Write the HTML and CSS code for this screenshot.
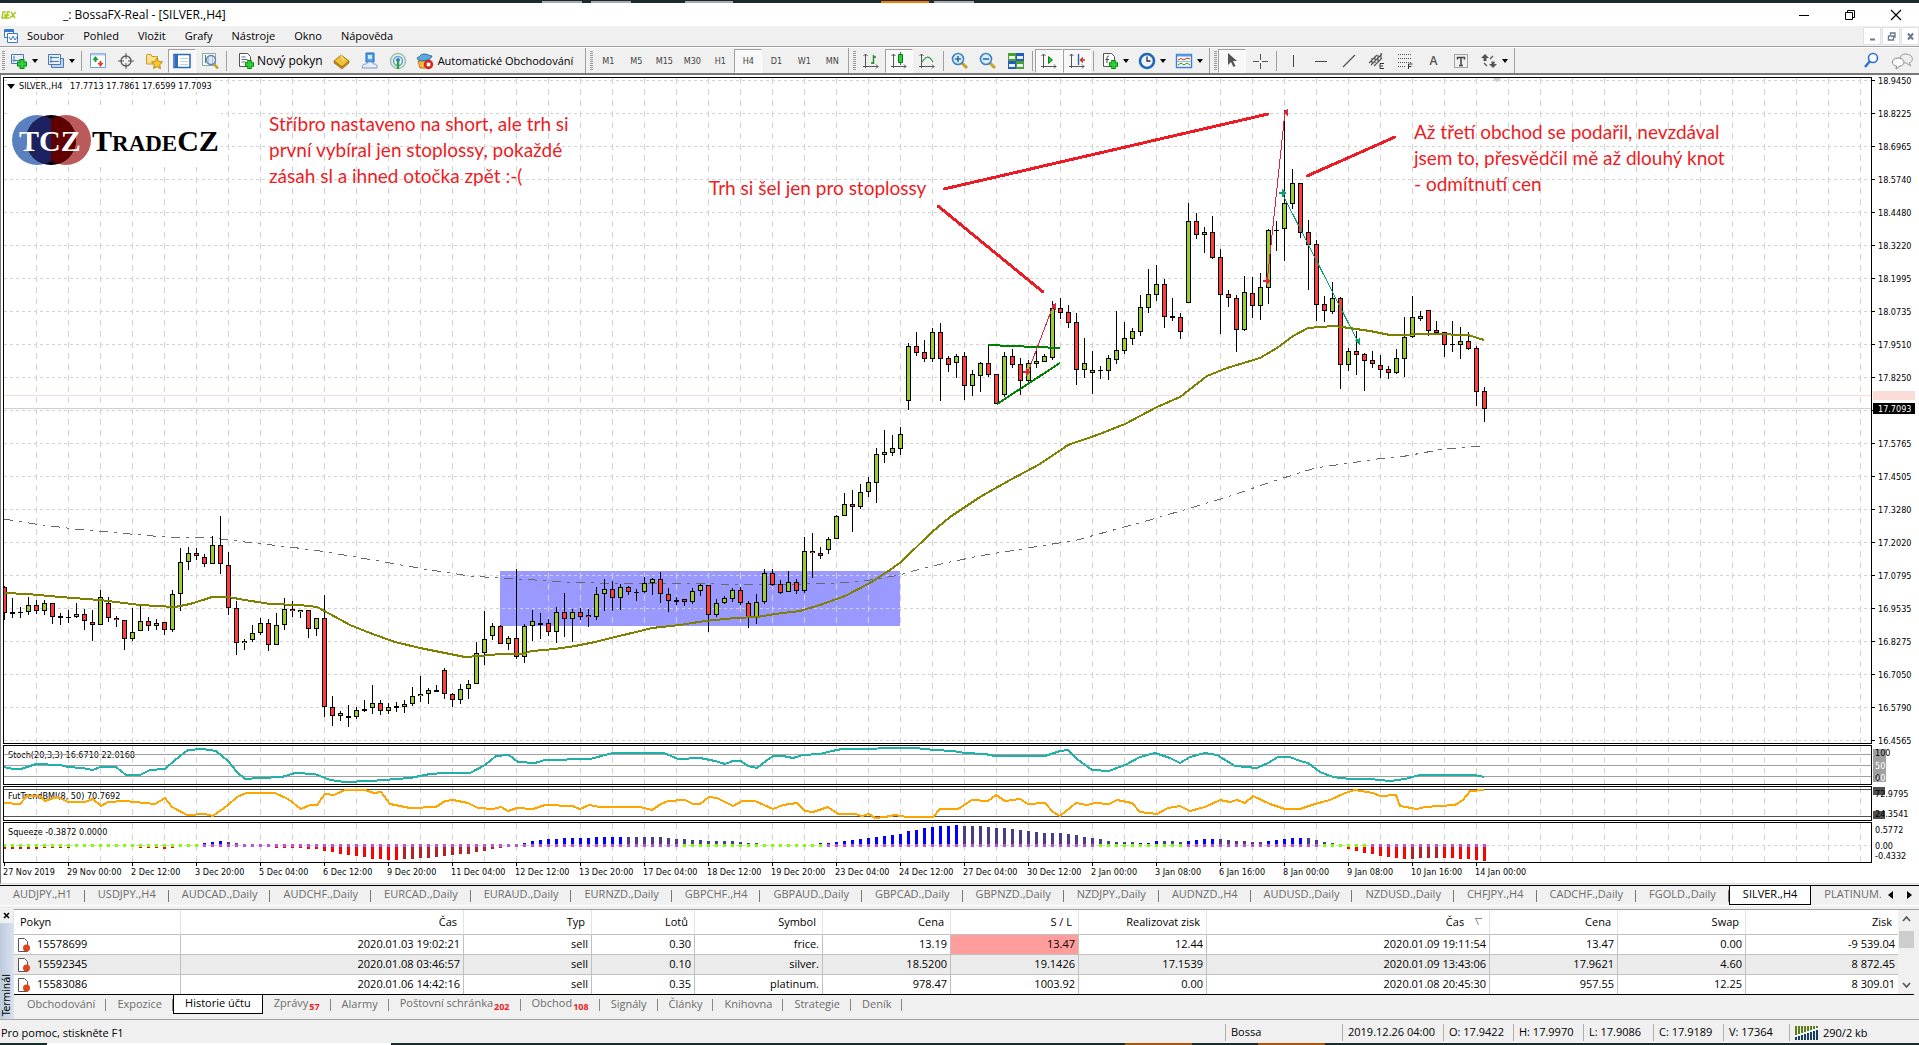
FILE: index.html
```html
<!DOCTYPE html>
<html lang="cs">
<head>
<meta charset="utf-8">
<title>BossaFX-Real - [SILVER.,H4]</title>
<link rel="stylesheet" href="styles.css">
</head>
<body>
<div class="desk desk--top" aria-hidden="true"><i class="chip chip--a"></i><i class="chip chip--b"></i><i class="chip chip--c"></i><i class="chip chip--d"></i><i class="chip chip--e"></i></div>

<header class="titlebar">
  <svg class="titlebar__logo" width="16" height="10" viewBox="0 0 16 10"><path d="M5 2H2L1 8h3l.5-3H3M9 2H6.500L5.500 8h3M6 5h2.500M10 2l4 6M15 2l-6 6" fill="none" stroke="#a9c820" stroke-width="1.500"/></svg>
  <span class="titlebar__text">_: BossaFX-Real - [SILVER.,H4]</span>
  <div class="titlebar__buttons">
    <button aria-label="Minimalizovat"><svg width="12" height="12"><path d="M1 6.500h10" stroke="#000"/></svg></button>
    <button aria-label="Obnovit"><svg width="12" height="12"><path d="M1.500 3.500h7v7h-7zM3.500 3.500v-2h7v7h-2" fill="none" stroke="#000"/></svg></button>
    <button aria-label="Zavřít"><svg width="12" height="12"><path d="M1 1l10 10M11 1L1 11" stroke="#000" stroke-width="1.200"/></svg></button>
  </div>
</header>

<nav class="menubar">
  <svg class="menubar__icon" width="16" height="16"><path d="M1.500 1.500h9v8h-9z" fill="#fff" stroke="#3b78c8"/><path d="M1 3h10" stroke="#3b78c8" stroke-width="2"/><path d="M4.500 5.500h10v9h-10z" fill="#fff" stroke="#3b78c8"/><path d="M6 9l2 3 2-4 2 4 2-3" fill="none" stroke="#3b78c8"/></svg>
  <a href="#">Soubor</a><a href="#">Pohled</a><a href="#">Vložit</a><a href="#">Grafy</a><a href="#">Nástroje</a><a href="#">Okno</a><a href="#">Nápověda</a>
  <div class="menubar__mdi">
    <button aria-label="Minimalizovat graf"><svg width="9" height="9"><path d="M2 7.500h5" stroke="#6b7a90" stroke-width="2"/></svg></button>
    <button aria-label="Obnovit graf"><svg width="9" height="9"><path d="M1.500 4h5v4h-5zM3.500 3V1h4.500v4H7" fill="none" stroke="#6b7a90" stroke-width="1.400"/></svg></button>
    <button aria-label="Zavřít graf"><svg width="9" height="9"><path d="M2 1.500l5 6M7 1.500l-5 6" stroke="#6b7a90" stroke-width="2"/></svg></button>
  </div>
</nav>

<div class="toolbar" role="toolbar">
  <div class="group">
    <i class="grip"></i>
    <button class="tool tool--drop" aria-label="Nový graf"><svg width="18" height="18"><path d="M1.500 2.500h12v9h-12z" fill="#e6f0fb" stroke="#4a78b0"/><path d="M4 4v6M2.500 8.500h9" stroke="#4a78b0"/><path d="M7 12h10M12 7v10" stroke="#078a10" stroke-width="5"/><path d="M8 12h8M12 8v8" stroke="#2fd23a" stroke-width="3"/></svg><i class="caret"></i></button>
    <button class="tool tool--drop" aria-label="Profily"><svg width="18" height="18"><path d="M4.500 6.500h12v9h-12z" fill="#bcd6f4" stroke="#4a78b0"/><path d="M1.500 2.500h12v10h-12z" fill="#e6f0fb" stroke="#4a78b0"/><path d="M4 4v7M3 9.500h9M3 5.500h9" stroke="#4a78b0"/></svg><i class="caret"></i></button>
    <i class="sep"></i>
    <button class="tool" aria-label="Přehled trhu"><svg width="18" height="18"><path d="M1.500 1.500h15v14h-15z" fill="#fff" stroke="#6fa3d8"/><path d="M2 2.500h14" stroke="#a9cdf0" stroke-width="2"/><path d="M6.500 4l3 4H7.500v2h-2V8H3.500z" fill="#17a02a"/><path d="M11.500 15l3-4h-2V9h-2v2h-2z" fill="#e0451f"/></svg></button>
    <button class="tool" aria-label="Okno dat"><svg width="18" height="18"><circle cx="9" cy="9" r="5" fill="none" stroke="#555" stroke-width="1.300"/><path d="M9 1v6M9 11v6M1 9h6M11 9h6" stroke="#555"/></svg></button>
    <button class="tool" aria-label="Navigátor"><svg width="18" height="18"><path d="M1.500 3.500V12h11V4.500H7L6 2.500H2z" fill="#fbe28a" stroke="#c99b2c"/><path d="M12 6l1.700 3.500 3.800.5-2.800 2.600.7 3.900-3.400-1.900-3.400 1.900.7-3.900L6.500 10l3.800-.5z" fill="#ffc928" stroke="#b88412"/></svg></button>
    <button class="tool tool--on" aria-label="Terminál"><svg width="18" height="18"><path d="M1 2.500h16v13H1z" fill="#fff" stroke="#2e6bc0" stroke-width="1.600"/><path d="M3.500 2v13" stroke="#2e6bc0" stroke-width="3"/><path d="M7 6.500h8M7 9.500h8M7 12.500h8" stroke="#bcd0ea"/></svg></button>
    <button class="tool" aria-label="Tester strategií"><svg width="18" height="18"><path d="M1.500 1.500h13v12h-13z" fill="#f4f7fa" stroke="#8aa"/><path d="M4.500 3v8M7.500 5v6M11.500 3v8" stroke="#678"/><circle cx="10" cy="8" r="4.500" fill="#cfe6fa" fill-opacity=".7" stroke="#5f87ad" stroke-width="1.400"/><path d="M13 12l4 4.500" stroke="#c8a12a" stroke-width="2.600"/></svg></button>
    <i class="sep"></i>
    <button class="tool tool--text"><svg width="18" height="18"><path d="M2.500 1.500h8l3 3v10h-11z" fill="#fff" stroke="#555"/><path d="M4.500 5h4M4.500 7.500h6M4.500 10h4" stroke="#667"/><path d="M8 12.500h9M12.500 8v9" stroke="#078a10" stroke-width="4.600"/><path d="M9 12.500h7M12.500 9v7" stroke="#2fd23a" stroke-width="2.600"/></svg>Nový pokyn</button>
    <button class="tool" aria-label="MetaEditor"><svg width="18" height="18"><path d="M1 9l7-6 8 6-7 6z" fill="#f0c136" stroke="#a87610"/><path d="M1 9v2l8 6 7-6V9l-7 6z" fill="#c88f1b" stroke="#8d620c" stroke-width=".6"/><path d="M8 3l3 6" stroke="#fff0b0"/></svg></button>
    <button class="tool" aria-label="Účet"><svg width="18" height="18"><path d="M5 1h8v9H5z" fill="#4fa3ea" stroke="#1d6bb5"/><path d="M7 3h4v4H7z" fill="#cfe8fc"/><path d="M1.500 16c-1-4 3-4 4-4 1-3 6-3 7 0 3-.5 4 2 3.500 4z" fill="#e8eef7" stroke="#7d96bd"/></svg></button>
    <button class="tool" aria-label="Signály"><svg width="18" height="18"><circle cx="9" cy="9" r="7.500" fill="none" stroke="#9cc4ae" stroke-width="1.600"/><circle cx="9" cy="9" r="4.500" fill="none" stroke="#5fa7c8" stroke-width="1.600"/><circle cx="9" cy="8" r="2" fill="#2a7fc0"/><path d="M9 9v8" stroke="#36a143" stroke-width="2.400"/></svg></button>
    <button class="tool tool--auto"><svg width="18" height="18"><path d="M2 9l2 7h7l3-8z" fill="#f6b73c" stroke="#b9781a"/><path d="M1 6c3-1 3-4 7-4s5 2 8 2c-1 5-14 7-15 2z" fill="#58a9dd" stroke="#2c6f9f"/><circle cx="12.500" cy="12.500" r="4.700" fill="#d5261c"/><path d="M10.700 10.700h3.600v3.600h-3.600z" fill="#fff"/></svg>Automatické Obchodování</button>
  </div>
  <div class="group group--frames">
    <i class="grip"></i>
    <button class="tool tool--tf">M1</button><button class="tool tool--tf">M5</button><button class="tool tool--tf">M15</button><button class="tool tool--tf">M30</button><button class="tool tool--tf">H1</button><button class="tool tool--tf tool--on">H4</button><button class="tool tool--tf">D1</button><button class="tool tool--tf">W1</button><button class="tool tool--tf">MN</button>
  </div>
  <div class="group">
    <i class="grip"></i>
    <button class="tool" aria-label="Sloupcový graf"><svg width="18" height="18"><path d="M3.500 2v14M1 14.500h15M1.500 4l2-2 2 2M14 12.500l2 2-2 2" fill="none" stroke="#555"/><path d="M11.500 3v9M9 11h2.500M11.500 5H14" stroke="#168a1d" stroke-width="1.400"/></svg></button>
    <button class="tool tool--on" aria-label="Svíčkový graf"><svg width="18" height="18"><path d="M3.500 2v14M1 14.500h15M1.500 4l2-2 2 2M14 12.500l2 2-2 2" fill="none" stroke="#555"/><path d="M10.500 0v13" stroke="#168a1d"/><path d="M8.500 2.500h4v8h-4z" fill="#2dcf3a" stroke="#0b7a14"/></svg></button>
    <button class="tool" aria-label="Čárový graf"><svg width="18" height="18"><path d="M3.500 2v14M1 14.500h15M1.500 4l2-2 2 2M14 12.500l2 2-2 2" fill="none" stroke="#555"/><path d="M4 10c4-6 7-7 11 0" fill="none" stroke="#3a9b40" stroke-width="1.200"/></svg></button>
    <i class="sep"></i>
    <button class="tool" aria-label="Přiblížit"><svg width="18" height="18"><path d="M11 11l5 5" stroke="#c8a12a" stroke-width="3"/><circle cx="7" cy="7" r="5.500" fill="#d9edfc" stroke="#3f82bf" stroke-width="1.600"/><path d="M4 7h6M7 4v6" stroke="#2b6cab" stroke-width="1.600"/></svg></button>
    <button class="tool" aria-label="Oddálit"><svg width="18" height="18"><path d="M11 11l5 5" stroke="#c8a12a" stroke-width="3"/><circle cx="7" cy="7" r="5.500" fill="#d9edfc" stroke="#3f82bf" stroke-width="1.600"/><path d="M4 7h6" stroke="#2b6cab" stroke-width="1.600"/></svg></button>
    <button class="tool" aria-label="Dlaždice"><svg width="18" height="18"><path d="M1 1h8v8H1zM9 9h8v8H9z" fill="#4aa02c"/><path d="M9 1h8v8H9zM1 9h8v8H1z" fill="#2559c4"/><path d="M2 4h6v3H2zM10 4h6v3h-6zM2 12h6v3H2zM10 12h6v3h-6z" fill="#e8f2fb"/></svg></button>
    <i class="sep"></i>
    <button class="tool tool--on" aria-label="Automatický posun"><svg width="18" height="18"><path d="M3.500 2v14M1 14.500h15M1.500 4l2-2 2 2M14 12.500l2 2-2 2" fill="none" stroke="#555"/><path d="M8.500 4.500l4 3.500-4 3.500z" fill="#29c233" stroke="#0f7e18"/></svg></button>
    <button class="tool tool--on" aria-label="Posun grafu"><svg width="18" height="18"><path d="M3.500 2v14M1 14.500h15M1.500 4l2-2 2 2M14 12.500l2 2-2 2" fill="none" stroke="#555"/><path d="M10.500 2v11" stroke="#2b5fb0" stroke-width="1.400"/><path d="M17 8h-4M15 5.500L12.500 8l2.500 2.500" fill="none" stroke="#c0391b" stroke-width="1.400"/></svg></button>
    <i class="sep"></i>
    <button class="tool tool--drop" aria-label="Indikátory"><svg width="18" height="18"><path d="M2.500 1.500h8l3 3v10h-11z" fill="#fff" stroke="#555"/><path d="M8 4c-2 0-2 1-2 3v4M4.500 7.500H8" fill="none" stroke="#444"/><path d="M8 12.500h9M12.500 8v9" stroke="#078a10" stroke-width="4.600"/><path d="M9 12.500h7M12.500 9v7" stroke="#2fd23a" stroke-width="2.600"/></svg><i class="caret"></i></button>
    <button class="tool tool--drop" aria-label="Periody"><svg width="18" height="18"><circle cx="9" cy="9" r="7" fill="#eaf4fd" stroke="#1f66b4" stroke-width="2.600"/><path d="M9 4.500V9h3.500" fill="none" stroke="#333" stroke-width="1.300"/></svg><i class="caret"></i></button>
    <button class="tool tool--drop" aria-label="Šablony"><svg width="18" height="18"><path d="M1.500 2.500h15v13h-15z" fill="#fff" stroke="#3f82c9" stroke-width="1.400"/><path d="M2 3.500h14" stroke="#5d9be0" stroke-width="2"/><path d="M3 8l3-1.500L9 8l3-2 3 1" fill="none" stroke="#b5321d"/><path d="M2 9.500h14" stroke="#9bc"/><path d="M3 13l3-2 3 2 3-2 3 2" fill="none" stroke="#1f8f2b"/></svg><i class="caret"></i></button>
  </div>
  <div class="group">
    <i class="grip"></i>
    <button class="tool tool--on" aria-label="Kurzor"><svg width="18" height="18"><path d="M5 1v12l3-3 2.500 5 2-1L10 9h4z" fill="#555"/></svg></button>
    <button class="tool" aria-label="Nitkový kříž"><svg width="18" height="18"><path d="M9.500 2v6M9.500 11v6M2 9.500h6M11 9.500h6" stroke="#555"/></svg></button>
    <i class="sep"></i>
    <button class="tool" aria-label="Svislá čára"><svg width="18" height="18"><path d="M9.500 3v12" stroke="#444"/></svg></button>
    <button class="tool" aria-label="Vodorovná čára"><svg width="18" height="18"><path d="M3 9.500h12" stroke="#444"/></svg></button>
    <button class="tool" aria-label="Trendová čára"><svg width="18" height="18"><path d="M3 15L15 3" stroke="#555" stroke-width="1.200"/></svg></button>
    <button class="tool" aria-label="Kanál"><svg width="18" height="18"><path d="M1 11l8-8M3 13L14 2M6 14l8-8M4 6v6M7 4v7M10 3v7M13 1v6" stroke="#555" stroke-width="1.100"/><path d="M16 11.500h-4v5h4M12 14h3" fill="none" stroke="#333"/></svg></button>
    <button class="tool" aria-label="Fibonacci"><svg width="18" height="18"><path d="M2 2.500h14M2 6.500h14M2 10.500h14M2 14.500h8" stroke="#555" stroke-dasharray="1 1"/><path d="M12.500 17v-5h4M12.500 14.500h3" fill="none" stroke="#333"/></svg></button>
    <button class="tool tool--letter" aria-label="Text">A</button>
    <button class="tool" aria-label="Popisek"><svg width="18" height="18"><path d="M2.500 2.500h13v13h-13z" fill="none" stroke="#555" stroke-dasharray="1 1"/><path d="M5 5.500h8M9 6v8M7 13.500h4M5.500 5v2.500M12.500 5v2.500" stroke="#444" stroke-width="1.500"/></svg></button>
    <button class="tool tool--drop" aria-label="Šipky"><svg width="18" height="18"><path d="M5 2l4 4H6.500v3h-3V6H1zM13 16l-4-4h2.500V9.500h3V12H17z" fill="#555"/><path d="M4 11l3 3M10 7l3-3" stroke="#555" stroke-width="1.300"/></svg><i class="caret"></i></button>
  </div>
  <div class="toolbar__end">
    <button class="tool" aria-label="Hledat"><svg width="18" height="18"><circle cx="11" cy="6" r="4.500" fill="#fff" stroke="#2f6fd0" stroke-width="1.600"/><path d="M8 9l-5 6" stroke="#2f6fd0" stroke-width="2.400"/></svg></button>
    <button class="tool" aria-label="Chat"><svg width="22" height="18"><path d="M14 2c9 0 9 8 4 9l2 3-5-3c-8-1-7-9-1-9z" fill="#eee" stroke="#999"/><path d="M7 6c8 0 7 8 2 8l-4 3 .5-3C-.5 13 0 6 7 6z" fill="#fafafa" stroke="#888"/></svg></button>
  </div>
</div>

<main class="chart">
  <section class="pane pane--price">
    <div class="plot">
      <svg class="plot__svg" id="price"></svg>
      <div class="quote"><i class="quote__mark"></i>SILVER.,H4&nbsp;&nbsp; 17.7713 17.7861 17.6599 17.7093</div>
      <svg class="brand" width="212" height="62" viewBox="0 0 212 62" role="img" aria-label="TradeCZ">
        <defs><clipPath id="cl"><circle cx="29" cy="35" r="25"/></clipPath><clipPath id="cr"><circle cx="56" cy="35" r="25"/></clipPath><clipPath id="half"><path d="M42 0h60v62H42z"/></clipPath></defs>
        <path d="M0 0h212v62H0z" fill="#fff"/>
        <circle cx="28" cy="35" r="25" fill="#5b80c0"/><circle cx="57" cy="35" r="25" fill="#bb5a5a"/><circle cx="42" cy="35" r="25" fill="#000"/>
        <circle cx="42" cy="35" r="25" fill="#1d2160" clip-path="url(#cl)"/>
        <g clip-path="url(#half)"><circle cx="42" cy="35" r="25" fill="#600000" clip-path="url(#cr)"/></g>
        <text class="brand__badge" x="10" y="46">TCZ</text>
        <text class="brand__name" x="83" y="46">T<tspan class="brand__small">RADE</tspan>CZ</text>
      </svg>
      <p class="note note--short">Stříbro nastaveno na short, ale trh si<br>první vybíral jen stoplossy, pokaždé<br>zásah sl a ihned otočka zpět :-(</p>
      <p class="note note--stops">Trh si šel jen pro stoplossy</p>
      <p class="note note--third">Až třetí obchod se podařil, nevzdával<br>jsem to, přesvědčil mě až dlouhý knot<br>- odmítnutí cen</p>
    </div>
    <svg class="axis" id="price-axis"></svg>
  </section>
  <section class="pane pane--stoch"><div class="plot"><svg class="plot__svg" id="stoch"></svg></div><svg class="axis" id="stoch-axis"></svg></section>
  <section class="pane pane--fut"><div class="plot"><svg class="plot__svg" id="fut"></svg></div><svg class="axis" id="fut-axis"></svg></section>
  <section class="pane pane--squeeze"><div class="plot"><svg class="plot__svg" id="squeeze"></svg></div><svg class="axis" id="squeeze-axis"></svg></section>
  <svg class="times" id="times"></svg>
</main>

<nav class="charttabs">
  <div class="charttabs__list">
    <button>AUDJPY.,H1</button><button>USDJPY.,H4</button><button>AUDCAD.,Daily</button><button>AUDCHF.,Daily</button><button>EURCAD.,Daily</button><button>EURAUD.,Daily</button><button>EURNZD.,Daily</button><button>GBPCHF.,H4</button><button>GBPAUD.,Daily</button><button>GBPCAD.,Daily</button><button>GBPNZD.,Daily</button><button>NZDJPY.,Daily</button><button>AUDNZD.,H4</button><button>AUDUSD.,Daily</button><button>NZDUSD.,Daily</button><button>CHFJPY.,H4</button><button>CADCHF.,Daily</button><button>FGOLD.,Daily</button><button class="is-active">SILVER.,H4</button><button>PLATINUM.,</button>
  </div>
  <button class="charttabs__arrow" aria-label="Doleva"><svg width="5" height="8"><path d="M5 0v8L0 4z"/></svg></button>
  <button class="charttabs__arrow" aria-label="Doprava"><svg width="5" height="8"><path d="M0 0v8l5-4z"/></svg></button>
</nav>

<section class="terminal">
  <aside class="terminal__side"><button aria-label="Zavřít terminál"><svg width="7" height="7"><path d="M1 1l5 5M6 1L1 6" stroke="#000" stroke-width="1.600"/></svg></button><span>Terminál</span></aside>
  <div class="terminal__body">
    <div class="history">
      <table class="orders">
        <colgroup><col class="c167"><col class="c283"><col class="c128"><col class="c103"><col class="c128"><col class="c128"><col class="c128"><col class="c128"><col class="c283"><col class="c128"><col class="c128"><col class="c152"></colgroup>
        <thead><tr><th>Pokyn</th><th>Čas</th><th>Typ</th><th>Lotů</th><th>Symbol</th><th>Cena</th><th>S / L</th><th>Realizovat zisk</th><th>Čas <svg class="sort" width="8" height="8"><path d="M0 .500h7M.500 0l3 7" fill="none" stroke="#888"/></svg></th><th>Cena</th><th>Swap</th><th>Zisk</th></tr></thead>
        <tbody>
          <tr><td><svg class="doc" width="14" height="14"><path d="M1.500.500h6l3 3v10h-9z" fill="#fff" stroke="#555"/><circle cx="9.500" cy="10" r="3.500" fill="#e0451f"/></svg>15578699</td><td>2020.01.03 19:02:21</td><td>sell</td><td>0.30</td><td>frice.</td><td>13.19</td><td class="hit">13.47</td><td>12.44</td><td>2020.01.09 19:11:54</td><td>13.47</td><td>0.00</td><td>-9 539.04</td></tr>
          <tr><td><svg class="doc" width="14" height="14"><path d="M1.500.500h6l3 3v10h-9z" fill="#fff" stroke="#555"/><circle cx="9.500" cy="10" r="3.500" fill="#e0451f"/></svg>15592345</td><td>2020.01.08 03:46:57</td><td>sell</td><td>0.10</td><td>silver.</td><td>18.5200</td><td>19.1426</td><td>17.1539</td><td>2020.01.09 13:43:06</td><td>17.9621</td><td>4.60</td><td>8 872.45</td></tr>
          <tr><td><svg class="doc" width="14" height="14"><path d="M1.500.500h6l3 3v10h-9z" fill="#fff" stroke="#555"/><circle cx="9.500" cy="10" r="3.500" fill="#e0451f"/></svg>15583086</td><td>2020.01.06 14:42:16</td><td>sell</td><td>0.35</td><td>platinum.</td><td>978.47</td><td>1003.92</td><td>0.00</td><td>2020.01.08 20:45:30</td><td>957.55</td><td>12.25</td><td>8 309.01</td></tr>
        </tbody>
      </table>
      <div class="scroll" aria-hidden="true"><svg width="9" height="6"><path d="M1 5l3.500-4L8 5" fill="none" stroke="#555" stroke-width="1.600"/></svg><i class="scroll__thumb"></i><svg width="9" height="6"><path d="M1 1l3.500 4L8 1" fill="none" stroke="#555" stroke-width="1.600"/></svg></div>
    </div>
    <div class="termtabs">
      <button>Obchodování</button><button>Expozice</button><button class="is-active">Historie účtu</button><button>Zprávy<b>57</b></button><button>Alarmy</button><button>Poštovní schránka<b>202</b></button><button>Obchod<b>108</b></button><button>Signály</button><button>Články</button><button>Knihovna</button><button>Strategie</button><button>Deník</button>
    </div>
  </div>
</section>

<footer class="status">
  <span class="status__help">Pro pomoc, stiskněte F1</span>
  <span class="status__cell status__cell--profile">Bossa</span>
  <span class="status__cell status__cell--date">2019.12.26 04:00</span>
  <span class="status__cell">O: 17.9422</span><span class="status__cell">H: 17.9970</span><span class="status__cell">L: 17.9086</span><span class="status__cell">C: 17.9189</span><span class="status__cell status__cell--volume">V: 17364</span>
  <span class="status__cell status__cell--net"><svg width="24" height="14"><path d="M1 0v9M4 0v8M7 0v7M10 0v6M13 0v5M16 0v4M19 0v3M22 0v2" stroke="#5c7f1c" stroke-width="2"/><path d="M1 11v3M4 10v4M7 9v5M10 8v6M13 7v7M16 6v8M19 5v9M22 4v10" stroke="#153f63" stroke-width="2"/></svg>290/2 kb</span>
</footer>
<div class="desk desk--bottom" aria-hidden="true"><i class="chip chip--f"></i><i class="chip chip--g"></i><i class="chip chip--h"></i></div>
<script src="chart.js"></script>
</body>
</html>
```
FILE: styles.css
```css
* { box-sizing: border-box; }
body {
  margin: 0;
  min-height: 100vh;
  display: flex;
  flex-direction: column;
  overflow: hidden;
  background: #f0f0f0;
  color: #000;
  font: 11px/16px "Open Sans", "Noto Sans", sans-serif;
}
button { border: 0; margin: 0; padding: 0; background: none; font: inherit; color: inherit; white-space: nowrap; }
a { color: inherit; text-decoration: none; }
svg { display: block; flex: none; }

/* desktop slivers above and below the window */
.desk { display: flex; align-items: flex-end; background: #1c2b30; }
.desk--top { height: 3px; }
.desk--bottom { height: 2px; }
.chip { height: 2px; background: #aaa; }
.chip--a { width: 40px; margin-left: 542px; }
.chip--b { width: 40px; margin-left: 9px; }
.chip--c { width: 48px; margin-left: 54px; }
.chip--d { width: 48px; margin-left: 148px; background: #f57c00; }
.chip--e { width: 40px; margin-left: 5px; }
.chip--f { width: 344px; margin-left: 47px; background: #fff; }
.chip--g { width: 67px; margin-left: 734px; background: #a8560f; }
.chip--h { width: 67px; margin-left: 66px; background: #a8560f; }

.titlebar { height: 23px; display: flex; align-items: center; background: #fff; }
.titlebar__logo { margin-left: 1px; }
.titlebar__text { margin-left: 46px; font-size: 12px; }
.titlebar__buttons { margin-left: auto; display: flex; }
.titlebar__buttons button { width: 46px; display: flex; justify-content: center; }

.menubar { height: 21px; display: flex; align-items: center; border-bottom: 1px solid #a0a0a0; padding-left: 3px; }
.menubar__icon { margin-right: 8px; }
.menubar a { margin-right: 19px; }
.menubar__mdi { margin-left: auto; display: flex; gap: 1px; }
.menubar__mdi button { width: 18px; height: 18px; display: grid; place-items: center; background: #fff; border: 1px solid #e2e2e2; }

.toolbar { height: 28px; display: flex; align-items: stretch; border-top: 1px solid #fff; border-bottom: 2px solid #777; color: #000; }
.group { display: flex; align-items: center; padding: 0 2px; border-right: 1px solid #a0a0a0; }
.grip { width: 3px; height: 20px; background: repeating-linear-gradient(#999 0 1px, transparent 1px 2px); }
.group + .group .grip { margin: 0 1px 0 2px; }
.sep { width: 1px; height: 20px; margin: 0 2px; background: #a0a0a0; }
.tool { width: 28px; height: 24px; display: flex; align-items: center; justify-content: center; }
.tool--drop { width: 37px; gap: 4px; }
.tool--on { background: #f8f8f8; border: 1px solid #a0a0a0; border-right-color: #fff; border-bottom-color: #fff; }
.tool--text { width: auto; gap: 2px; padding: 0 5px 0 8px; font-size: 12px; }
.tool--auto { width: auto; gap: 4px; padding: 0 10px 0 4px; }
.tool--tf { font: 9px/12px "DejaVu Sans Condensed", "DejaVu Sans", sans-serif; color: #444; }
.tool--letter { font-size: 12px; font-weight: 600; color: #555; }
.caret { border: 3px solid transparent; border-top: 4px solid #000; border-bottom: 0; }
.toolbar__end { margin-left: auto; display: flex; align-items: center; gap: 3px; padding-right: 3px; }

.chart { flex: 1; display: flex; flex-direction: column; gap: 1px; padding: 2px 0 0 2px; background: #fff; border-left: 1px solid #777; border-bottom: 1px solid #ddd; }
.pane { display: grid; grid-template: minmax(0, 1fr) / minmax(0, 1fr) 47px; }
.pane--price { flex: 1; min-height: 400px; }
.pane--stoch { height: 40px; }
.pane--fut { height: 35px; }
.pane--squeeze { height: 41px; }
.plot { position: relative; overflow: hidden; border: 1px solid #000; }
.plot__svg { position: absolute; inset: 0; width: 100%; height: 100%; }
.axis { width: 100%; height: 100%; min-height: 0; overflow: visible; }
.times { width: 100%; height: 19px; overflow: visible; }
.small, .quote { font: 9px/12px "DejaVu Sans Condensed", "DejaVu Sans", sans-serif; }
.quote { position: absolute; left: 3px; top: 2px; display: flex; align-items: center; gap: 4px; background: #fff; }
.quote__mark { border: 4px solid transparent; border-top: 5px solid #000; border-bottom: 0; }
.brand { position: absolute; left: 5px; top: 27px; font-family: "Liberation Serif", serif; font-weight: 700; }
.brand__badge { font-size: 30px; fill: #fff; }
.brand__name { font-size: 30px; fill: #000; }
.brand__small { font-size: 23px; }
.note { position: absolute; margin: 0; color: #ed1c24; font: 19px/26px Lato, "Open Sans", sans-serif; white-space: nowrap; }
.note--short { left: 265px; top: 33px; }
.note--stops { left: 705px; top: 97px; }
.note--third { left: 1410px; top: 41px; }

.charttabs { height: 21px; margin-top: 1px; display: flex; border-top: 1px solid #000; border-bottom: 1px solid #fff; color: #6d6d6d; }
.charttabs__list { flex: 1; min-width: 0; display: flex; overflow: hidden; }
.charttabs__list button { flex: none; height: 19px; padding: 0 13px 2px; line-height: 16px; position: relative; }
.charttabs__list button::after { content: ""; position: absolute; right: 0; top: 4px; height: 12px; border-right: 1px solid #777; }
.charttabs__list .is-active { background: #fff; color: #000; border: 1px solid #000; border-top: 0; }
.charttabs__list .is-active::after, .charttabs__list button:last-child::after { display: none; }
.charttabs__arrow { width: 19px; display: grid; place-items: center; }

.terminal { margin-top: 3px; display: flex; }
.terminal__side { width: 14px; display: flex; flex-direction: column; align-items: center; border-right: 1px solid #e2e2e2; }
.terminal__side button { height: 14px; display: grid; place-items: center; }
.terminal__side span { flex: 1; width: 13px; writing-mode: vertical-rl; transform: rotate(180deg); background: linear-gradient(90deg, #d5e1ef, #bccbdd); font: 10px/13px "DejaVu Sans", sans-serif; padding-top: 3px; }
.terminal__body { flex: 1; min-width: 0; padding-right: 5px; border-top: 1px solid #a0a0a0; }
.history { display: flex; background: #fff; border-bottom: 1px solid #000; }
.orders { flex: 1; table-layout: fixed; border-collapse: separate; border-spacing: 0; }
.c103 { width: 103px; } .c128 { width: 128px; } .c152 { width: 152px; } .c167 { width: 167px; } .c283 { width: 283px; }
.orders th { height: 25px; padding: 0 6px; font-weight: 400; text-align: right; border-right: 1px solid #e2e2e2; border-bottom: 1px solid #c0c0c0; white-space: nowrap; }
.orders td { height: 20px; padding: 0 3px 2px; line-height: 17px; text-align: right; border-right: 1px solid #c0c0c0; border-bottom: 1px solid #c0c0c0; white-space: nowrap; }
.orders tr > :first-child { text-align: left; }
.orders tr > :last-child { border-right: 0; }
.orders tbody tr:nth-child(2) { background: #ebebeb; }
.orders tbody tr:last-child td { height: 19px; border-bottom: 0; }
.orders .hit { background: #ff9d9d; }
.doc { display: inline-block; vertical-align: middle; margin-right: 6px; }
.sort { display: inline-block; margin-left: 8px; }
.scroll { width: 16px; display: flex; flex-direction: column; align-items: center; justify-content: space-between; padding: 6px 0; background: #f0f0f0; }
.scroll__thumb { width: 15px; height: 17px; margin-bottom: 24px; background: #cdcdcd; }
.termtabs { height: 24px; display: flex; color: #6d6d6d; padding-left: 2px; }
.termtabs button { height: 19px; padding: 0 11px 2px; position: relative; line-height: 16px; }
.termtabs button::after { content: ""; position: absolute; right: 0; top: 4px; height: 12px; border-right: 1px solid #888; }
.termtabs .is-active { background: #fff; color: #000; border: 1px solid #000; border-top: 0; }
.termtabs .is-active::after { display: none; }
.termtabs b { font-size: 9px; color: #ed1c24; vertical-align: -3px; margin-left: 1px; }

.status { height: 24px; display: flex; align-items: center; border-top: 1px solid #a0a0a0; padding-top: 2px; }
.status__help { flex: 1; padding-left: 1px; }
.status__cell { flex: none; height: 17px; width: 70px; padding-left: 5px; border-left: 1px solid #b0b0b0; white-space: nowrap; }
.status__cell--profile { width: 117px; }
.status__cell--date { width: 101px; }
.status__cell--volume { width: 66px; }
.status__cell--net { width: 130px; display: flex; align-items: center; gap: 4px; }
```
FILE: chart.js
```js
// Candles: [high, body top, body bottom, low, kind]; kind g = up, r = down, d = doji
const candles = `586 587 613 620 r|598 612 614 618 d|607 612 613 618 d|597 605 612 615 g|600 605 611 614 r|600 603 611 615 g|603 603 617 624 r|613 616 618 625 d|610 617 618 623 d|603 614 617 618 g
609 614 621 630 r|610 622 625 641 r|590 597 625 625 g|597 603 618 622 r|616 618 620 627 r|620 620 639 650 r|608 632 639 641 g|606 621 631 631 g|617 621 626 631 r|619 623 626 630 g
622 622 630 635 r|590 594 630 632 g|548 562 594 611 g|547 553 562 570 g|548 553 556 560 r|554 557 564 567 r|536 545 564 564 g|516 545 564 574 r|552 565 608 615 r|601 608 643 655 r
639 641 643 650 g|625 633 640 642 g|618 623 633 635 g|619 623 645 651 r|613 625 645 645 g|598 609 625 630 g|601 609 611 617 r|610 610 612 618 g|610 610 629 638 r|618 618 629 636 g
595 618 707 717 r|696 707 716 726 r|711 713 716 721 g|705 716 718 727 d|707 710 717 719 g|700 709 711 712 d|685 703 708 714 g|700 703 711 715 r|703 707 711 714 g|702 706 708 712 d
700 704 707 713 g|687 696 704 706 g|676 694 696 702 g|688 690 694 704 g|685 690 692 692 d|668 670 694 699 r|693 694 700 707 r|684 689 700 704 g|680 684 689 699 g|642 653 684 684 g
611 639 653 665 g|623 626 636 640 g|625 626 644 644 r|636 638 644 650 g|569 638 657 659 r|624 626 657 663 g|610 621 626 641 g|613 623 625 639 d|619 623 632 636 r|607 612 632 643 g
593 612 619 637 r|609 612 619 642 g|608 612 617 620 r|609 615 617 627 r|587 594 617 620 g|579 589 594 611 g|581 589 598 611 r|584 587 598 610 g|586 587 592 595 r|589 592 593 601 d
577 583 592 593 g|578 579 583 595 g|572 579 594 603 r|588 594 601 612 r|597 600 602 605 d|599 599 602 606 r|588 591 602 604 g|584 585 591 596 g|585 585 615 632 r|599 603 615 617 g
596 598 603 604 g|588 590 599 602 g|587 590 603 605 r|601 603 617 628 r|594 602 617 624 g|569 573 602 604 g|569 573 585 586 r|580 584 593 594 r|571 582 592 592 g|579 582 591 594 r
537 551 591 593 g|533 551 553 578 r|547 553 556 559 r|537 539 550 554 g|515 516 539 539 g|493 504 516 516 g|490 504 507 532 r|484 492 507 509 g|477 482 492 497 g|448 454 483 503 g
430 452 455 463 g|435 448 453 456 g|427 434 449 455 g|343 346 401 410 g|332 346 353 356 r|340 352 359 362 r|328 332 359 362 g|323 332 359 401 r|356 358 365 372 r|354 356 363 378 g
352 356 386 400 r|370 374 386 396 g|362 363 376 392 g|345 363 375 377 r|374 374 404 404 r|352 356 395 397 g|349 356 365 368 r|358 364 381 395 r|360 363 381 383 g|348 361 364 368 g
354 356 362 362 g|301 308 358 360 g|298 308 313 319 r|305 312 323 328 r|313 322 370 385 r|338 363 370 378 g|351 370 373 394 g|366 370 371 379 d|355 358 371 380 g|311 350 360 364 g
322 338 351 354 g|328 331 339 345 g|295 307 332 336 g|269 294 308 313 g|265 284 295 301 g|279 284 317 328 r|298 316 318 321 d|313 317 332 339 r|203 221 303 303 g|213 221 235 239 r
227 232 235 253 g|216 232 258 259 r|249 257 295 334 r|290 294 298 307 r|295 298 330 352 r|276 292 330 331 g|277 293 306 318 r|273 287 306 320 g|229 230 288 304 g|221 230 231 251 d
110 203 229 261 g|169 183 204 209 g|183 183 233 238 r|220 232 245 290 r|240 244 305 321 r|296 304 311 322 r|282 298 312 314 g|297 298 365 389 r|348 351 365 371 g|331 351 355 375 r
353 354 361 391 r|351 360 364 368 r|355 365 370 378 r|366 369 373 379 r|349 358 373 374 g|317 337 359 377 g|296 317 337 338 g|311 316 319 321 g|310 310 331 336 r|321 330 333 333 r
332 332 345 357 r|321 344 345 352 d|327 341 345 359 g|332 341 349 350 r|346 348 392 406 r|387 391 409 422 r`.split(/[|\n]/).map(c => c.split(' '));

const slowMA = '4,593 28,594 60,597 100,600 140,605 175,607 190,604 203,600 212,597 228,597 245,600 270,604 300,605 317,607 330,614 350,625 370,633 395,642 420,648 450,654 465,657 480,656 500,654 522,654 532,651 555,649 575,646 595,642 615,637 640,631 652,628 680,625 705,621 735,618 757,617 775,614 800,611 820,605 845,596 870,583 890,570 901,562 932,532 950,517 980,497 1010,480 1040,464 1068,445 1097,435 1125,424 1157,407 1180,397 1207,376 1227,368 1260,358 1277,348 1293,336 1308,328 1333,326 1342,327 1370,331 1390,335 1433,334 1468,335 1484,340';
const trendMA = '4,519 35,524 75,529 130,534 165,537 212,538 245,542 290,547 320,551 350,556 390,563 430,570 470,576 500,578 535,580 565,582 600,583 660,583 720,584 770,585 840,583 870,580 900,575 920,569 950,562 979,556 1077,540 1150,520 1224,498 1280,479 1293,475 1315,468 1350,463 1377,459 1400,457 1444,449 1484,446';
const stochLine = '4,767 13,769 21,769 36,764 60,765 68,767 82,768 93,770 100,767 116,767 126,775 140,775 150,770 165,769 175,760 188,750 203,749 216,751 228,761 237,772 245,779 260,778 282,777 295,773 315,774 330,780 345,782 370,781 410,778 430,774 445,773 470,773 485,765 496,756 509,755 518,762 535,763 545,760 590,759 613,753 640,753 664,753 678,759 700,758 715,761 725,764 733,761 741,761 748,766 757,768 766,761 773,756 783,756 793,758 803,755 820,754 832,751 842,749 915,748 935,750 953,751 965,753 985,754 995,756 1045,756 1060,751 1068,750 1077,759 1092,770 1109,771 1125,765 1140,757 1155,753 1170,758 1180,763 1190,757 1205,753 1217,755 1235,766 1257,768 1268,763 1278,757 1290,757 1300,761 1308,763 1320,772 1333,777 1350,779 1370,779 1390,781 1405,779 1420,775 1438,775 1460,775 1475,775 1484,777';
const futLine = '4,803 20,804 27,796 40,796 45,801 58,797 68,802 85,802 93,799 101,806 108,802 125,801 155,804 165,798 172,807 187,815 205,814 213,816 228,805 237,797 246,793 275,793 288,799 301,809 310,805 317,805 325,794 334,795 345,790 365,790 374,793 381,792 390,804 410,808 436,807 445,801 453,800 468,803 478,808 493,809 501,807 508,811 517,808 533,809 545,805 572,806 580,809 589,805 600,807 640,807 652,810 661,804 668,801 685,800 693,804 700,804 709,797 717,798 733,806 742,801 755,801 773,809 783,805 797,803 805,811 813,812 828,807 838,814 855,814 862,816 869,814 875,818 885,817 895,815 907,817 933,817 940,809 958,809 972,800 988,801 996,795 1005,801 1020,799 1028,804 1045,803 1053,812 1060,816 1076,803 1087,805 1095,803 1109,804 1117,800 1132,803 1140,812 1157,814 1168,808 1180,806 1190,811 1205,807 1220,800 1230,802 1237,800 1245,803 1253,796 1270,804 1285,809 1300,809 1315,804 1330,800 1345,793 1355,790 1373,793 1380,796 1396,795 1400,806 1417,809 1425,807 1455,805 1463,800 1470,791 1484,790';
const momentum = [-3,-3,-3,-3,-3,-2,-2,-2,-2,-1,-1,-1,-1,-1,-1,-1,-1,-2,-2,-2,-3,-2,-1,0,1,2,3,4,3,2,1,0,0,-1,-2,-2,-2,-2,-3,-3,-5,-6,-8,-9,-10,-11,-13,-13,-14,-14,-13,-13,-12,-12,-11,-10,-9,-8,-8,-6,-5,-3,-2,0,1,2,4,5,6,6,7,7,7,7,8,8,8,8,8,8,8,8,8,7,6,6,5,5,4,4,4,4,3,2,2,1,1,1,1,1,1,1,2,2,3,4,5,6,7,8,9,10,11,14,15,17,18,19,19,20,19,19,19,18,17,17,16,15,14,13,12,12,12,11,10,8,7,6,4,3,3,3,2,2,4,4,4,3,4,5,6,6,6,5,4,4,3,3,4,5,6,7,7,7,5,3,2,0,-3,-5,-7,-8,-10,-11,-12,-13,-13,-12,-12,-12,-12,-12,-13,-13,-14,-15];
const ranges = (n, list) => list.some(([a, b]) => n >= a && n <= b);
const fading = [[0, 16], [22, 23], [28, 32], [50, 62], [78, 94], [120, 141], [145, 147], [152, 157], [163, 167], [176, 179]];
const greenDots = [[0, 24], [85, 102], [137, 147], [165, 170]];
const prices = ['18.9450','18.8225','18.6965','18.5740','18.4480','18.3220','18.1995','18.0735','17.9510','17.8250','','17.5765','17.4505','17.3280','17.2020','17.0795','16.9535','16.8275','16.7050','16.5790','16.4565'];
const times = ['27 Nov 2019','29 Nov 00:00','2 Dec 12:00','3 Dec 20:00','5 Dec 04:00','6 Dec 12:00','9 Dec 20:00','11 Dec 04:00','12 Dec 12:00','13 Dec 20:00','17 Dec 04:00','18 Dec 12:00','19 Dec 20:00','23 Dec 04:00','24 Dec 12:00','27 Dec 04:00','30 Dec 12:00','2 Jan 00:00','3 Jan 08:00','6 Jan 16:00','8 Jan 00:00','9 Jan 08:00','10 Jan 16:00','14 Jan 00:00'];

const rect = (x, y, w, h, fill) => `<rect x="${x}" y="${y}" width="${w}" height="${h}" fill="${fill}"/>`;
const path = (d, stroke, w = 1, extra = '') => `<path d="${d}" fill="none" stroke="${stroke}" stroke-width="${w}" ${extra}/>`;
const line = (pts, stroke, w, extra = '') => `<polyline points="${pts}" fill="none" stroke="${stroke}" stroke-width="${w}" ${extra}/>`;
const text = (x, y, s, fill = '#000') => `<text class="small" x="${x}" y="${y}" fill="${fill}">${s}</text>`;
const put = (id, left, top, body) => {
  document.getElementById(id).innerHTML = `<g shape-rendering="crispEdges" transform="translate(${-left} ${-top})">${body}</g>`;
};
const columns = (top, bottom, right) => {
  let s = '';
  for (let x = 36; x < right; x += 32) s += path(`M${x}.5 ${top}V${bottom}`, '#d3d3d3', 1, 'stroke-dasharray="6 5"');
  return s;
};

function draw() {
  const right = document.getElementById('price').clientWidth + 4;
  let s = rect(500, 571, 400, 55, '#9999ff') + columns(78, 743, right);
  for (let y = 80; y <= 740; y += 33) s += path(`M4 ${y}.5H${right}`, '#d3d3d3', 1, 'stroke-dasharray="3 3"');
  s += path(`M4 395.500H${right}`, '#fadcd8') + path(`M4 408.500H${right}`, '#d0d0d0');
  s += line(trendMA, '#696969', 1, 'stroke-dasharray="9 6 3 6"');
  candles.forEach(([h, t, b, l, k], n) => {
    const x = 4 + 8 * n;
    s += rect(x, h, 1, l - h, '#000') + rect(x - 2, t, 5, b - t, '#000');
    if (k !== 'd') s += rect(x - 1, +t + 1, 3, Math.max(b - t - 2, 1), k === 'g' ? '#9acd32' : '#ff3b3b');
  });
  s += line(slowMA, '#808000', 2);
  s += path('M988 345L1060 348M997 404L1060 363', '#008000', 2);
  s += path('M1028 372L1053 306M1267 283L1285 112', '#d7263d', 1);
  s += path('M1282 193L1358 342', '#0aa070', 1);
  s += '<path d="M1023 371h3v-3l4 4-4 4v-3h-3zM1263 280h3v-3l4 4-4 4v-3h-3zM1056 303v7l-5-4zM1288 109v7l-5-4z" fill="#d7263d"/>';
  s += '<path d="M1279 192h3v-3l4 4-4 4v-3h-3zM1360 338v7l-6-5z" fill="#0aa070"/><path d="M1492 78h9l-4 5z" fill="#d0d0d0"/>';
  s += path('M944 189L1268 114M938 206L1043 292M1307 176L1395 137', '#ed1c24', 3, 'stroke-linecap="round"');
  put('price', 4, 78, s);

  s = '';
  prices.forEach((p, i) => { s += rect(0, 80 + 33 * i, 3, 1, '#000') + text(6, 84 + 33 * i, p); });
  s += rect(1, 391, 42, 9, '#fadcd8') + rect(1, 403, 42, 11, '#000') + text(6, 412, '17.7093', '#fff');
  put('price-axis', 0, 77, s);

  s = columns(746, 784, right) + text(8, 758, 'Stoch(20,3,3) 16.6710 22.0168');
  [754, 765, 776].forEach(y => { s += path(`M4 ${y}.5H${right}`, '#a0a0a0'); });
  put('stoch', 4, 746, s + line(stochLine, '#20b2aa', 2));
  s = rect(1, 749, 13, 33, '#a0a0a0') + text(3, 769, '50', '#fff') + text(3, 781, '20', '#fff') + text(3, 756, '100') + text(3, 781, '0');
  put('stoch-axis', 0, 745, s);

  s = columns(787, 820, right) + text(8, 799, 'FutTrendBMI(8, 50) 70.7692');
  [789, 816].forEach(y => { s += path(`M4 ${y}.5H${right}`, '#505050'); });
  put('fut', 4, 787, s + line(futLine, '#ffa500', 2));
  s = rect(1, 787, 12, 8, '#505050') + rect(1, 811, 12, 8, '#505050') + text(3, 797, '72.9795') + text(3, 817, '24.3541');
  put('fut-axis', 0, 786, s);

  s = columns(823, 862, right) + path(`M4 845.500H${right}`, '#d3d3d3', 1, 'stroke-dasharray="3 3"') + text(8, 835, 'Squeeze -0.3872 0.0000');
  momentum.forEach((v, n) => {
    const x = 3 + 8 * n, weak = ranges(n, fading);
    s += v > 0 ? rect(x, 845 - v, 3, v, weak ? '#483d8b' : '#0000ff') : rect(x, 846, 3, -v, weak ? '#b22222' : '#ff0000');
    s += rect(x, 844, 3, 3, ranges(n, greenDots) ? '#7fff00' : '#ba55d3');
  });
  put('squeeze', 4, 823, s);
  put('squeeze-axis', 0, 822, text(3, 833, '0.5772') + text(3, 849, '0.00') + text(3, 859, '-0.4332'));

  s = '';
  times.forEach((t, i) => { s += rect(4 + 64 * i, 862, 1, 3, '#000') + text(3 + 64 * i, 874, t); });
  put('times', 3, 863, s);
}
draw();
addEventListener('resize', draw);
```
